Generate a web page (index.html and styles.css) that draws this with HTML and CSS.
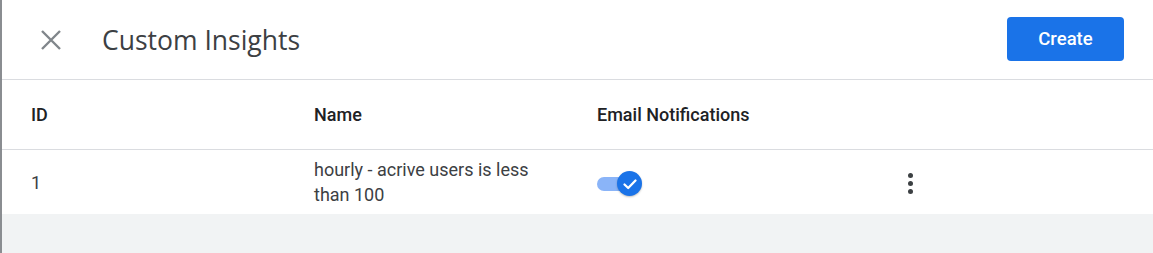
FILE: index.html
```html
<!DOCTYPE html>
<html>
<head>
<meta charset="utf-8">
<link rel="stylesheet" href="styles.css">
</head>
<body>
<div class="panel">
  <header class="topbar">
    <button class="close" aria-label="Close">
      <svg width="22" height="22" viewBox="0 0 22 22"><path d="M2 2 20 20M20 2 2 20" stroke="#80868b" stroke-width="2.4" fill="none"/></svg>
    </button>
    <h1 class="title">Custom Insights</h1>
    <button class="create">Create</button>
  </header>
  <div class="table">
    <div class="row head">
      <div class="cell c-id">ID</div>
      <div class="cell c-name">Name</div>
      <div class="cell c-email">Email Notifications</div>
      <div class="cell c-menu"></div>
    </div>
    <div class="row data">
      <div class="cell c-id">1</div>
      <div class="cell c-name">hourly - acrive users is less than 100</div>
      <div class="cell c-email">
        <span class="toggle">
          <span class="track"></span>
          <span class="thumb">
            <svg width="16" height="16" viewBox="0 0 16 16"><path d="M2.5 8.5 6.2 12 13.5 4.5" stroke="#fff" stroke-width="2.3" fill="none" stroke-linecap="round" stroke-linejoin="round"/></svg>
          </span>
        </span>
      </div>
      <div class="cell c-menu">
        <span class="kebab"><i></i><i></i><i></i></span>
      </div>
    </div>
  </div>
  <div class="footer"></div>
</div>
</body>
</html>
```
FILE: styles.css
```css
* { box-sizing: border-box; }
html, body { margin: 0; padding: 0; }
body {
  font-family: Roboto, "Liberation Sans", sans-serif;
  background: #fff;
  color: #202124;
}
.panel {
  width: 1153px;
  height: 253px;
  border-left: 2px solid #8a8d91;
  display: flex;
  flex-direction: column;
}
.topbar {
  height: 80px;
  border-bottom: 1px solid #dadce0;
  display: flex;
  align-items: center;
  padding-left: 38px;
  padding-right: 29px;
}
.close {
  width: 22px;
  height: 22px;
  border: 0;
  background: none;
  padding: 0;
  display: flex;
}
.title {
  margin: 0 0 0 40px;
  font-family: "Open Sans", Roboto, sans-serif;
  font-weight: 400;
  font-size: 26.5px;
  color: #3c4043;
  flex: 1;
  letter-spacing: 0;
}
.create {
  width: 117px;
  height: 44px;
  border: 0;
  border-radius: 4px;
  background: #1a73e8;
  color: #fff;
  font-family: Roboto, sans-serif;
  font-weight: 500;
  font-size: 18.5px;
  margin-top: -2px;
}
.row {
  display: flex;
  align-items: center;
  padding-left: 29px;
}
.row.head {
  height: 70px;
  border-bottom: 1px solid #dadce0;
  font-weight: 500;
  font-size: 18px;
  color: #202124;
}
.row.data {
  height: 64px;
  font-size: 18px;
  color: #3c4043;
  line-height: 25px;
}
.c-id { width: 283px; }
.c-name { width: 283px; padding-right: 50px; }
.c-email { width: 302px; }
.c-menu { width: 30px; }
.toggle {
  position: relative;
  display: block;
  width: 46px;
  height: 28px;
  margin-top: 4px;
}
.track {
  position: absolute;
  left: 0;
  top: 7px;
  width: 38px;
  height: 14px;
  border-radius: 7px;
  background: #8ab4f8;
}
.thumb {
  position: absolute;
  left: 20px;
  top: 1px;
  width: 25px;
  height: 25px;
  border-radius: 50%;
  background: #1a73e8;
  display: flex;
  align-items: center;
  justify-content: center;
  box-shadow: 0 1px 2px rgba(0,0,0,.25);
}
.kebab {
  display: flex;
  flex-direction: column;
  gap: 3px;
  width: 5px;
  margin-left: 9px;
  margin-top: 2px;
}
.kebab i {
  display: block;
  width: 5px;
  height: 5px;
  border-radius: 50%;
  background: #3c4043;
}
.footer {
  flex: 1;
  background: #f1f3f4;
}
```
